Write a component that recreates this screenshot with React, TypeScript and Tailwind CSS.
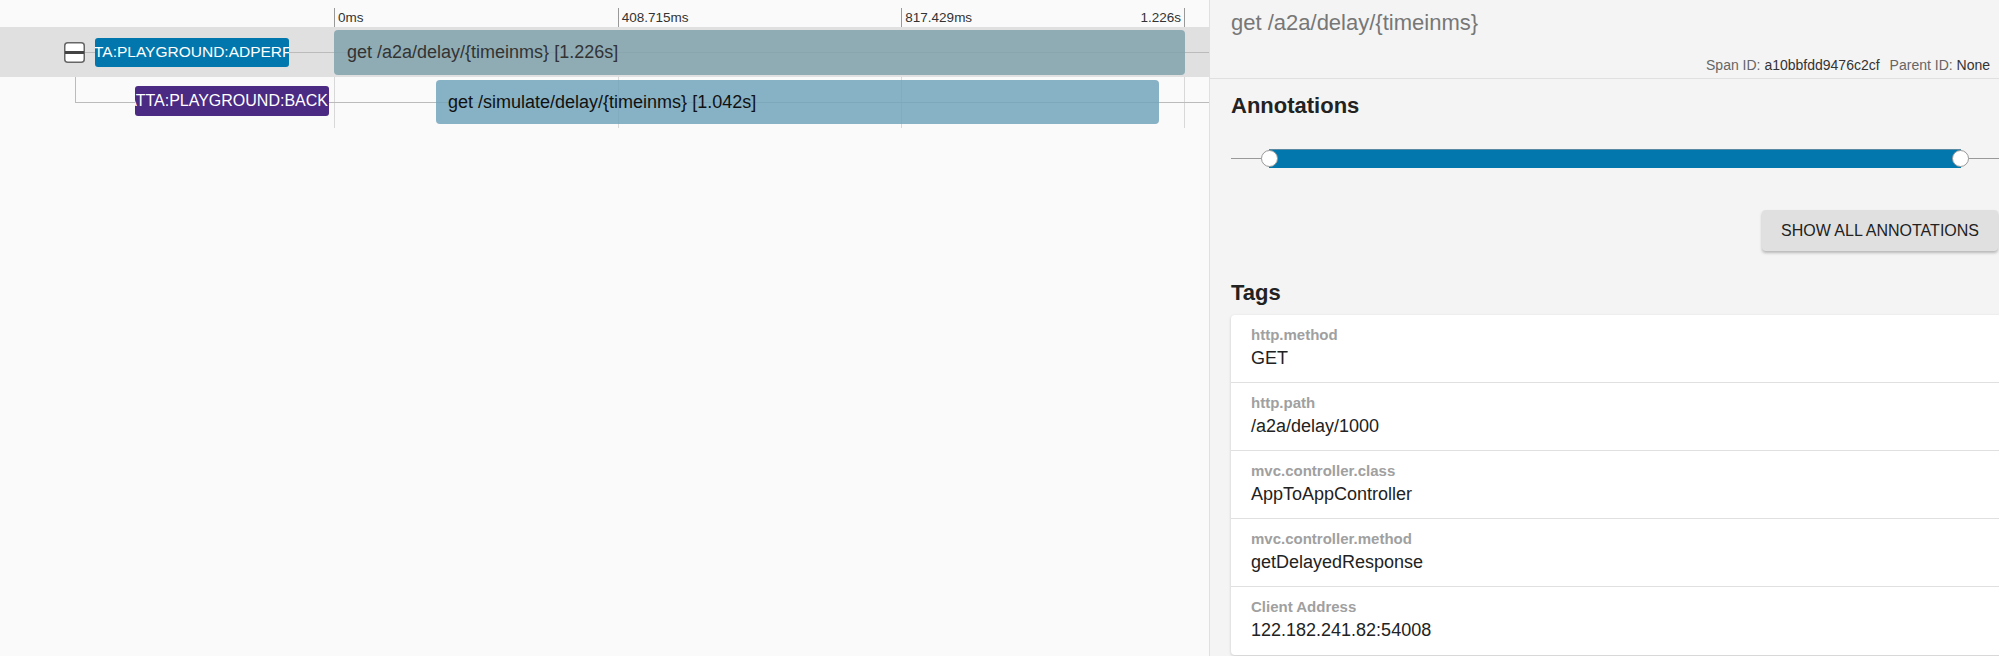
import React from 'react';

const tags = [
  { key: 'http.method', value: 'GET' },
  { key: 'http.path', value: '/a2a/delay/1000' },
  { key: 'mvc.controller.class', value: 'AppToAppController' },
  { key: 'mvc.controller.method', value: 'getDelayedResponse' },
  { key: 'Client Address', value: '122.182.241.82:54008' },
];

function CollapseBox() {
  return (
    <svg width="21" height="21" viewBox="0 0 21 21" className="relative">
      <rect x="0.75" y="0.75" width="19.5" height="19.5" rx="3" fill="#fff" stroke="#666" strokeWidth="1.5" />
      <rect x="1" y="9" width="19" height="3" fill="#444" />
    </svg>
  );
}

function Timeline() {
  return (
    <div className="relative w-[1209px] shrink-0 bg-[#fafafa] pt-2">
      {/* grid lines through the rows */}
      <div className="pointer-events-none absolute left-[334px] top-[27px] grid h-[101px] w-[851px] grid-cols-3">
        <div className="border-l border-[#d8d8d8]" />
        <div className="border-l border-[#d8d8d8]" />
        <div className="border-x border-[#d8d8d8]" />
      </div>
      {/* tree connector */}
      <div className="absolute left-[75px] top-[63px] h-[40px] w-px bg-[#bbb]" />

      {/* tick header */}
      <div className="flex h-[19px] text-[13.5px] leading-[19px] text-[#333]">
        <div className="w-[334px] shrink-0" />
        <div className="grid w-[851px] grid-cols-3">
          <div className="border-l border-[#999] pl-[3px]">0ms</div>
          <div className="border-l border-[#999] pl-[3px]">408.715ms</div>
          <div className="flex justify-between border-x border-[#999] px-[3px]">
            <span>817.429ms</span>
            <span>1.226s</span>
          </div>
        </div>
      </div>

      {/* root span */}
      <div className="relative flex h-[50px] bg-[#e0e0e0]">
        <div className="absolute left-[80px] right-0 top-[25px] h-px bg-[#bbb]" />
        <div className="flex w-[334px] shrink-0 items-center pl-[64px]">
          <CollapseBox />
          <div className="relative ml-[10px] flex h-[29px] w-[194px] items-center overflow-hidden whitespace-nowrap rounded-[3px] bg-[#0277ad] text-[15.5px] text-white">
            <span className="-ml-px">TA:PLAYGROUND:ADPERFORMANCE</span>
          </div>
        </div>
        <div className="relative mt-[3px] flex h-[45px] w-[851px] items-center rounded-[4px] bg-[rgba(128,162,173,0.85)] pl-[13px] text-[18px] text-[#333]">
          get /a2a/delay/{'{timeinms}'} [1.226s]
        </div>
      </div>

      {/* child span */}
      <div className="relative flex h-[50px]">
        <div className="absolute left-[75px] right-0 top-[25px] h-px bg-[#bbb]" />
        <div className="flex w-[334px] shrink-0 items-center pl-[135px]">
          <div className="relative mt-[-2px] flex h-[30px] w-[194px] items-center justify-end overflow-hidden whitespace-nowrap rounded-[3px] bg-[#4a2a82] text-[16px] text-white">
            <span className="pr-[1px]">DATTA:PLAYGROUND:BACK</span>
          </div>
        </div>
        <div className="relative ml-[102px] mt-[3px] flex h-[44px] w-[723px] items-center rounded-[4px] bg-[rgba(114,163,187,0.85)] pl-[12px] text-[18px] text-[#111]">
          get /simulate/delay/{'{timeinms}'} [1.042s]
        </div>
      </div>
    </div>
  );
}

function Details() {
  return (
    <div className="flex min-w-0 flex-1 flex-col overflow-hidden border-l border-[#e0e0e0] bg-[#f4f4f4]">
      <div className="h-[79px] border-b border-[#e0e0e0] pl-[21px] pr-[9px]">
        <div className="pt-[10px] text-[22px] leading-[26px] text-[#777]">get /a2a/delay/{'{timeinms}'}</div>
        <div className="mt-[21px] flex justify-end gap-[10px] text-[14px] leading-[17px]">
          <span>
            <span className="text-[#666]">Span ID: </span>
            <span className="text-[#333]">a10bbfdd9476c2cf</span>
          </span>
          <span>
            <span className="text-[#666]">Parent ID: </span>
            <span className="text-[#333]">None</span>
          </span>
        </div>
      </div>

      <div className="pl-[21px]">
        <div className="mt-[14px] text-[22px] font-bold leading-[26px] text-[#222]">Annotations</div>

        <div className="relative mt-[30px] h-[19px]">
          <div className="absolute left-0 right-0 top-[9px] h-px bg-[#999]" />
          <div className="absolute left-[38px] right-[38px] top-0 h-[19px] border-t border-[#5a8aa3] bg-[#0277ad]" />
          <div className="absolute left-[30px] top-[1px] h-[17px] w-[17px] rounded-full border border-[#999] bg-white" />
          <div className="absolute right-[30px] top-[1px] h-[17px] w-[17px] rounded-full border border-[#999] bg-white" />
        </div>

        <div className="mt-[42px] flex justify-end pr-px">
          <button className="h-[41px] rounded-[4px] bg-[#e0e0e0] px-[19px] text-[16px] text-[#222] shadow-[0_2px_3px_rgba(0,0,0,0.25)]">
            SHOW ALL ANNOTATIONS
          </button>
        </div>

        <div className="mt-[29px] text-[22px] font-bold leading-[26px] text-[#222]">Tags</div>

        <div className="-mr-2 mt-[9px] overflow-hidden rounded-[4px] bg-white shadow-[0_1px_3px_rgba(0,0,0,0.18)]">
          {tags.map((t, i) => (
            <div
              key={t.key}
              className={`h-[68px] pl-[20px] pt-[12px] ${i < tags.length - 1 ? 'border-b border-[#e0e0e0]' : ''}`}
            >
              <div className="text-[15px] font-bold leading-[16px] text-[#a0a0a0]">{t.key}</div>
              <div className="mt-[5px] text-[18px] leading-[20px] text-[#222]">{t.value}</div>
            </div>
          ))}
        </div>
      </div>
    </div>
  );
}

export default function App() {
  return (
    <div className="flex h-[656px] w-[1999px] overflow-hidden font-['Liberation_Sans',Arial,sans-serif]">
      <Timeline />
      <Details />
    </div>
  );
}
